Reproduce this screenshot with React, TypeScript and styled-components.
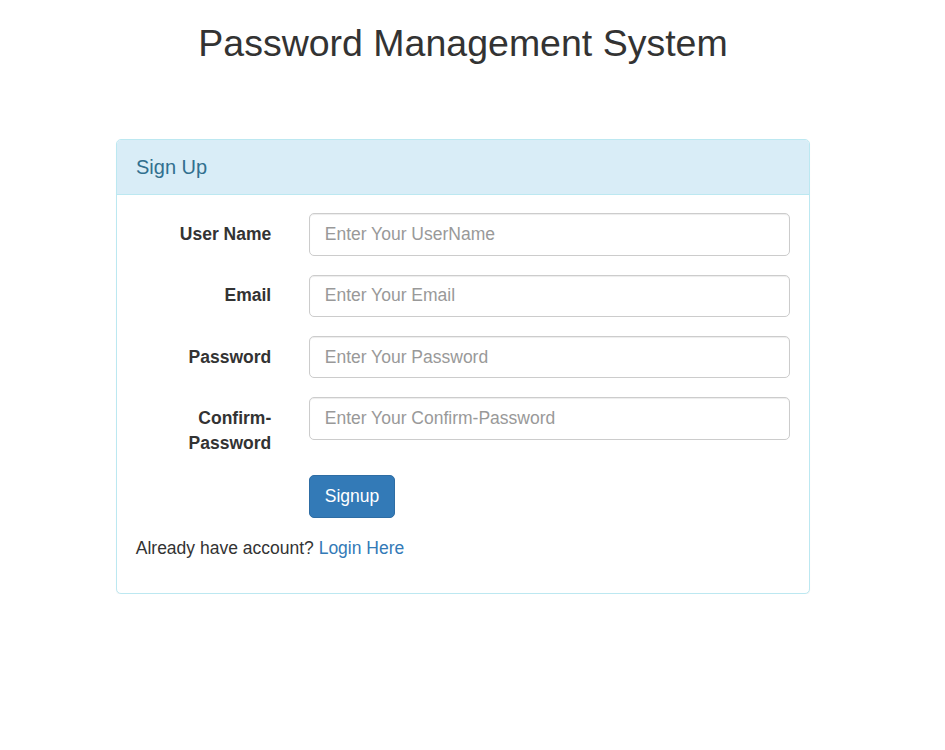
import React from "react";
import styled, { createGlobalStyle } from "styled-components";

const GlobalStyle = createGlobalStyle`
  html, body { margin: 0; padding: 0; background: #fff; }
  body {
    font-family: "Liberation Sans", Arial, Helvetica, sans-serif;
    font-size: 17.5px;
    line-height: 25px;
    color: #333;
  }
  * { box-sizing: border-box; }
`;

const Page = styled.div`
  width: 926px;
  padding-top: 23px;
`;

const Title = styled.h2`
  margin: 0 0 75px;
  text-align: center;
  font-size: 37.5px;
  line-height: 41px;
  font-weight: 500;
  color: #333;
`;

const Panel = styled.div`
  width: 694px;
  margin: 0 auto;
  border: 1px solid #bce8f1;
  border-radius: 5px;
  background: #fff;
  box-shadow: 0 1px 1px rgba(0, 0, 0, 0.05);
`;

const PanelHeading = styled.div`
  background: #d9edf7;
  color: #31708f;
  border-bottom: 1px solid #bce8f1;
  border-radius: 4px 4px 0 0;
  padding: 12.5px 19px;
  font-size: 20px;
  line-height: 28.5px;
`;

const PanelBody = styled.div`
  padding: 18.75px 18.75px 18.75px;
`;

const Row = styled.div`
  display: grid;
  grid-template-columns: 25% 75%;
  margin: 0 -18.75px 18.75px;
`;

const Label = styled.label`
  padding: 8.75px 18.75px 0;
  text-align: right;
  font-weight: bold;
  color: #333;
  line-height: 25px;
`;

const Field = styled.div`
  padding: 0 18.75px;
`;

const Input = styled.input`
  display: block;
  width: 100%;
  height: 42.5px;
  padding: 7.5px 15px;
  font-family: inherit;
  font-size: 17.5px;
  line-height: 25px;
  color: #555;
  background: #fff;
  border: 1px solid #ccc;
  border-radius: 5px;
  box-shadow: inset 0 1px 1px rgba(0, 0, 0, 0.075);
  outline: none;
  &::placeholder { color: #999; opacity: 1; }
`;

const Button = styled.button`
  height: 43px;
  padding: 7.5px 15px;
  font-family: inherit;
  font-size: 17.5px;
  line-height: 25px;
  color: #fff;
  background: #337ab7;
  border: 1px solid #2e6da4;
  border-radius: 5px;
  cursor: pointer;
`;

const Footer = styled.p`
  margin: 0 0 12.5px;
`;

const Link = styled.a`
  color: #337ab7;
  text-decoration: none;
`;

const fields = [
  { label: "User Name", placeholder: "Enter Your UserName", type: "text" },
  { label: "Email", placeholder: "Enter Your Email", type: "email" },
  { label: "Password", placeholder: "Enter Your Password", type: "password" },
  { label: "Confirm-Password", placeholder: "Enter Your Confirm-Password", type: "password" },
];

export default function App() {
  return (
    <>
      <GlobalStyle />
      <Page>
        <Title>Password Management System</Title>
        <Panel>
          <PanelHeading>Sign Up</PanelHeading>
          <PanelBody>
            {fields.map((f) => (
              <Row key={f.label}>
                <Label>{f.label === "Confirm-Password" ? <>Confirm-<br />Password</> : f.label}</Label>
                <Field>
                  <Input type={f.type} placeholder={f.placeholder} />
                </Field>
              </Row>
            ))}
            <Row>
              <span />
              <Field>
                <Button>Signup</Button>
              </Field>
            </Row>
            <Footer>
              Already have account? <Link href="#">Login Here</Link>
            </Footer>
          </PanelBody>
        </Panel>
      </Page>
    </>
  );
}
